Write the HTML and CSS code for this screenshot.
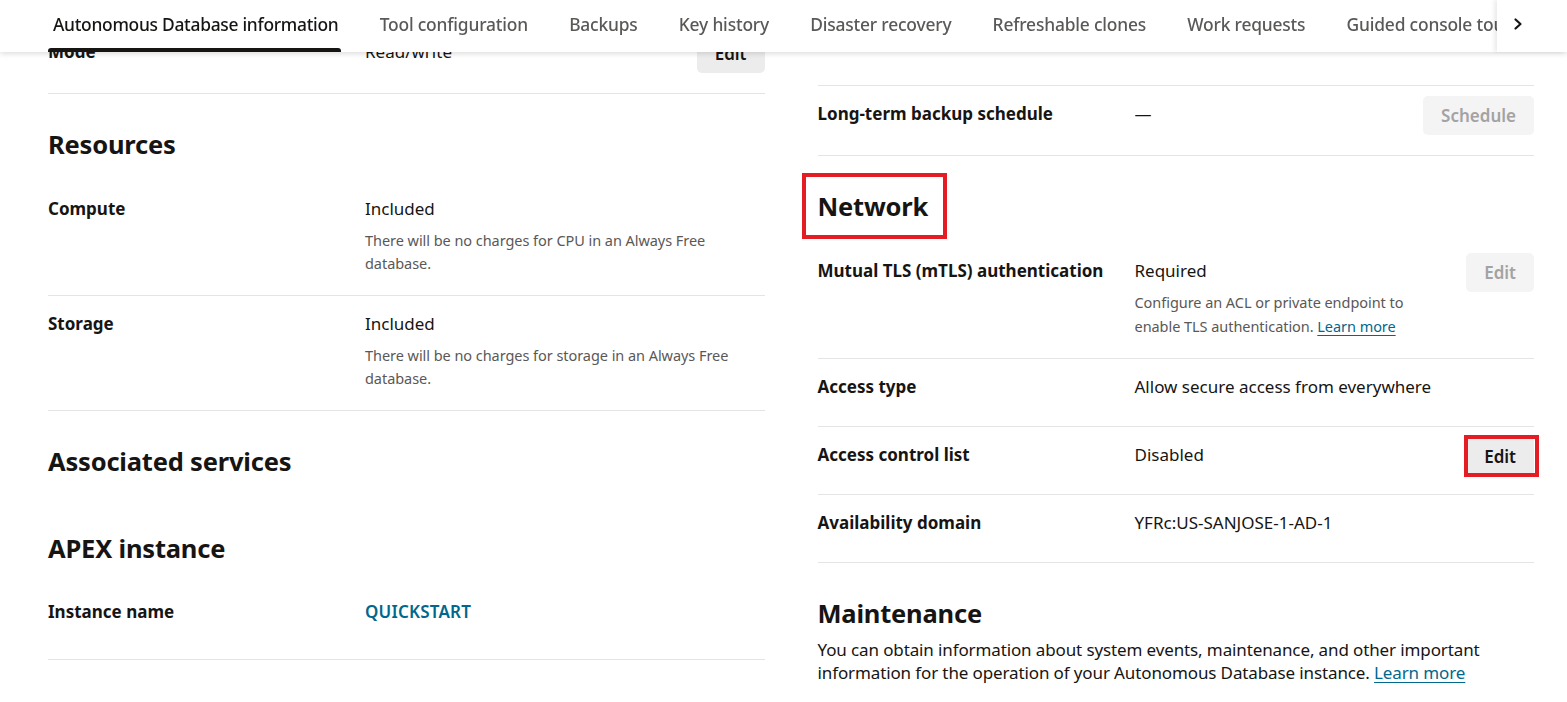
FILE: index.html
```html
<!DOCTYPE html>
<html lang="en">
<head>
<meta charset="utf-8">
<title>Autonomous Database information</title>
<link rel="stylesheet" href="styles.css">
</head>
<body>
<header class="tabbar">
  <nav class="tablist">
    <a class="tab tab-active">Autonomous Database information</a>
    <a class="tab">Tool configuration</a>
    <a class="tab">Backups</a>
    <a class="tab">Key history</a>
    <a class="tab">Disaster recovery</a>
    <a class="tab">Refreshable clones</a>
    <a class="tab">Work requests</a>
    <a class="tab">Guided console tour</a>
  </nav>
  <button class="tab-next" aria-label="Next">
    <svg width="12" height="14" viewBox="0 0 12 14"><path d="M3.5 2.5 L8.5 7 L3.5 11.5" fill="none" stroke="#161513" stroke-width="2.2" stroke-linecap="round" stroke-linejoin="round"/></svg>
  </button>
</header>

<main class="content">
  <section class="col col-left">
    <div class="row">
      <div class="label">Mode</div>
      <div class="value">Read/write</div>
      <div class="action"><button class="btn">Edit</button></div>
    </div>

    <h2 class="heading">Resources</h2>
    <div class="row">
      <div class="label">Compute</div>
      <div class="value">Included<p class="help help-left">There will be no charges for CPU in an Always Free database.</p></div>
      <div class="action"></div>
    </div>
    <div class="row">
      <div class="label">Storage</div>
      <div class="value">Included<p class="help help-left">There will be no charges for storage in an Always Free database.</p></div>
      <div class="action"></div>
    </div>

    <h2 class="heading">Associated services</h2>
    <h3 class="heading heading-sub">APEX instance</h3>
    <div class="row row-tight">
      <div class="label">Instance name</div>
      <div class="value"><a class="link-strong">QUICKSTART</a></div>
      <div class="action"></div>
    </div>
  </section>

  <section class="col col-right">
    <div class="row row-first">
      <div class="label">Long-term backup storage</div>
      <div class="value">&mdash;</div>
      <div class="action"></div>
    </div>
    <div class="row">
      <div class="label">Long-term backup schedule</div>
      <div class="value">&mdash;</div>
      <div class="action"><button class="btn btn-disabled">Schedule</button></div>
    </div>

    <h2 class="heading"><span class="annot-heading">Network</span></h2>
    <div class="row">
      <div class="label">Mutual TLS (mTLS) authentication</div>
      <div class="value">Required<p class="help help-narrow">Configure an ACL or private endpoint to enable TLS authentication. <a class="link">Learn more</a></p></div>
      <div class="action"><button class="btn btn-disabled">Edit</button></div>
    </div>
    <div class="row">
      <div class="label">Access type</div>
      <div class="value">Allow secure access from everywhere</div>
      <div class="action"></div>
    </div>
    <div class="row">
      <div class="label">Access control list</div>
      <div class="value">Disabled</div>
      <div class="action"><button class="btn annot-btn">Edit</button></div>
    </div>
    <div class="row">
      <div class="label">Availability domain</div>
      <div class="value">YFRc:US-SANJOSE-1-AD-1</div>
      <div class="action"></div>
    </div>

    <h2 class="heading heading-maint">Maintenance</h2>
    <p class="para">You can obtain information about system events, maintenance, and other important information for the operation of your Autonomous Database instance. <a class="link">Learn more</a></p>
  </section>
</main>
</body>
</html>
```

FILE: styles.css
```css
html, body {
  margin: 0;
  padding: 0;
  background: #ffffff;
}

body {
  font-family: "Noto Sans", "Open Sans", sans-serif;
  color: #161513;
  overflow: hidden;
}

/* ---------- Tab bar ---------- */
.tabbar {
  position: fixed;
  top: 0;
  left: 0;
  right: 0;
  height: 52px;
  background: #ffffff;
  box-shadow: 0 2px 5px rgba(0, 0, 0, 0.13);
  display: flex;
  z-index: 10;
}

.tablist {
  flex: 1;
  display: flex;
  gap: 33.2px;
  padding-left: 48px;
  overflow: hidden;
  white-space: nowrap;
}

.tab {
  position: relative;
  display: flex;
  align-items: center;
  height: 48px;
  padding: 0 3px 0 5px;
  font-size: 17.4px;
  font-weight: 500;
  color: #5b5957;
  letter-spacing: -0.18px;
}

.tab-active {
  color: #161513;
  letter-spacing: -0.28px;
}

.tab-active::after {
  content: "";
  position: absolute;
  left: 0;
  right: 0;
  bottom: -4px;
  height: 4px;
  background: #161513;
  border-radius: 3px 3px 0 0;
}

.tab-next {
  width: 70px;
  height: 52px;
  border: none;
  background: #ffffff;
  box-shadow: -3px 0 4px rgba(0, 0, 0, 0.08);
  display: flex;
  align-items: flex-start;
  padding: 17px 0 0 15px;
  position: relative;
  z-index: 1;
}

/* ---------- Content ---------- */
.content {
  display: flex;
  gap: 53px;
  padding: 0 33px 0 48px;
}

.col {
  flex: 1;
  min-width: 0;
}

.col-left {
  padding-top: 24px;
}

.col-right {
  padding-top: 14px;
}

.row {
  display: grid;
  grid-template-columns: 317px 1fr auto;
  align-items: start;
  box-sizing: border-box;
  min-height: 68px;
  padding: 16px 0 20px;
  border-bottom: 1px solid #e4e4e4;
}

.row-first {
  min-height: 72px;
}

.row-tight {
  padding-top: 8px;
}

.label {
  font-size: 17px;
  font-weight: 700;
  line-height: 24px;
}

.value {
  font-size: 17px;
  line-height: 24px;
}

.help {
  margin: 7px 0 0;
  font-size: 14.5px;
  line-height: 24px;
  color: #5a5856;
  letter-spacing: -0.05px;
}

.help-left {
  margin-top: 8px;
  line-height: 23px;
  max-width: 370px;
}

.help-narrow {
  max-width: 300px;
}

.action {
  display: flex;
  justify-content: flex-end;
}

.btn {
  height: 39px;
  margin: -6px 0 0;
  padding: 0 18px;
  border: none;
  border-radius: 5px;
  background: #ececec;
  color: #161513;
  font-family: inherit;
  font-size: 17px;
  font-weight: 600;
}

.btn-disabled {
  background: #f4f4f4;
  color: #a3a3a3;
}

.annot-btn {
  position: relative;
  margin-bottom: -2px;
}

.annot-btn::after {
  content: "";
  position: absolute;
  left: -2px;
  right: -5px;
  top: -2px;
  bottom: -1px;
  border: 4px solid #e31d23;
}

.link {
  color: #00688c;
  text-decoration: underline;
  text-underline-offset: 3px;
}

.link-strong {
  color: #00688c;
  font-weight: 600;
  letter-spacing: 0.2px;
}

.heading {
  margin: 34px 0 21px;
  font-size: 25.5px;
  font-weight: 700;
  line-height: 32px;
  letter-spacing: -0.2px;
}

.heading-sub {
  margin-top: 55px;
  margin-bottom: 28px;
}

.heading-maint {
  margin-bottom: 9px;
}

.annot-heading {
  outline: 4px solid #e31d23;
  outline-offset: 12px;
  padding-right: 3px;
}

.para {
  margin: 0;
  font-size: 17px;
  line-height: 23px;
  letter-spacing: -0.12px;
}
```
